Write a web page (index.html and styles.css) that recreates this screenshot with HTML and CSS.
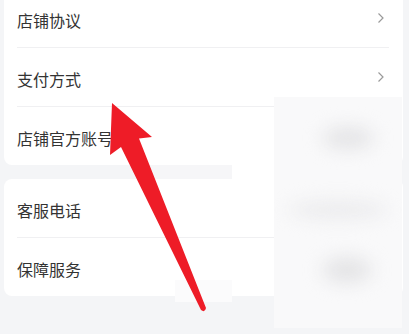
FILE: index.html
```html
<!DOCTYPE html>
<html lang="zh">
<head>
<meta charset="utf-8">
<link rel="stylesheet" href="styles.css">
</head>
<body>
<div class="page">
  <div class="card card-first">
    <div class="row row-a"><span class="label">店铺协议</span><svg class="chev" viewBox="0 0 8 12" width="8" height="12"><path d="M1.5 1.5 L6 6 L1.5 10.5" fill="none" stroke="#9a9a9a" stroke-width="1.2"/></svg></div>
    <div class="row row-a"><span class="label">支付方式</span><svg class="chev" viewBox="0 0 8 12" width="8" height="12"><path d="M1.5 1.5 L6 6 L1.5 10.5" fill="none" stroke="#9a9a9a" stroke-width="1.2"/></svg></div>
    <div class="row row-b last"><span class="label">店铺官方账号</span></div>
  </div>
  <div class="card">
    <div class="row row-a"><span class="label">客服电话</span></div>
    <div class="row row-b last"><span class="label">保障服务</span></div>
  </div>
</div>
<div class="patch patch-gapmid"></div>
<div class="patch patch-low"></div>
<div class="patch patch-gap"></div>
<div class="patch patch-right">
  <div class="blob blob1"></div>
  <div class="blob blob2"></div>
  <div class="blob blob3"></div>
</div>
<svg class="arrow" width="409" height="334" viewBox="0 0 409 334">
  <path d="M112 103 L152 137 L139 138.5 L206 308 Q205 313 201 310 L121 147 L110 155 Z" fill="#ee1c27"/>
</svg>
</body>
</html>
```

FILE: styles.css
```css
html, body {
  margin: 0;
  padding: 0;
  background: #f4f5f7;
  overflow: hidden;
  height: 334px;
}
body {
  font-family: "Noto Sans CJK SC", "Noto Sans", sans-serif;
  position: relative;
}
.page {
  display: flex;
  flex-direction: column;
  gap: 14px;
  padding: 0 6px 0 4px;
}
.card {
  background: #ffffff;
  border-radius: 8px;
  display: flex;
  flex-direction: column;
}
.card-first {
  margin-top: -11px;
}
.row {
  display: flex;
  align-items: center;
  justify-content: space-between;
  margin: 0 14px 0 13px;
  padding-top: 3px;
  box-sizing: border-box;
  border-bottom: 1px solid #f0f0f2;
}
.row-a { height: 59px; }
.row-b { height: 58px; }
.row.last { border-bottom: none; }
.label {
  font-size: 16px;
  color: #333333;
}
.chev {
  margin-right: 4px;
  margin-top: -3px;
}
.patch {
  position: absolute;
  background: #ffffff;
}
.patch-gapmid {
  left: 137px;
  top: 165px;
  width: 95px;
  height: 14px;
  background: #f6f6f8;
}
.patch-low {
  left: 175px;
  top: 280px;
  width: 57px;
  height: 22px;
  background: #fbfbfc;
}
.patch-gap {
  left: 232px;
  top: 165px;
  width: 42px;
  height: 14px;
}
.patch-right {
  left: 274px;
  top: 97px;
  width: 128px;
  height: 231px;
  background: #f9f9fa;
  overflow: hidden;
}
.blob {
  position: absolute;
  background: #e4e4e6;
  border-radius: 50%;
  filter: blur(9px);
}
.blob1 { left: 48px; top: 30px; width: 52px; height: 22px; }
.blob2 { left: 14px; top: 104px; width: 100px; height: 18px; background: #ebebed; }
.blob3 { left: 48px; top: 160px; width: 50px; height: 26px; }
.arrow {
  position: absolute;
  left: 0;
  top: 0;
}
```
